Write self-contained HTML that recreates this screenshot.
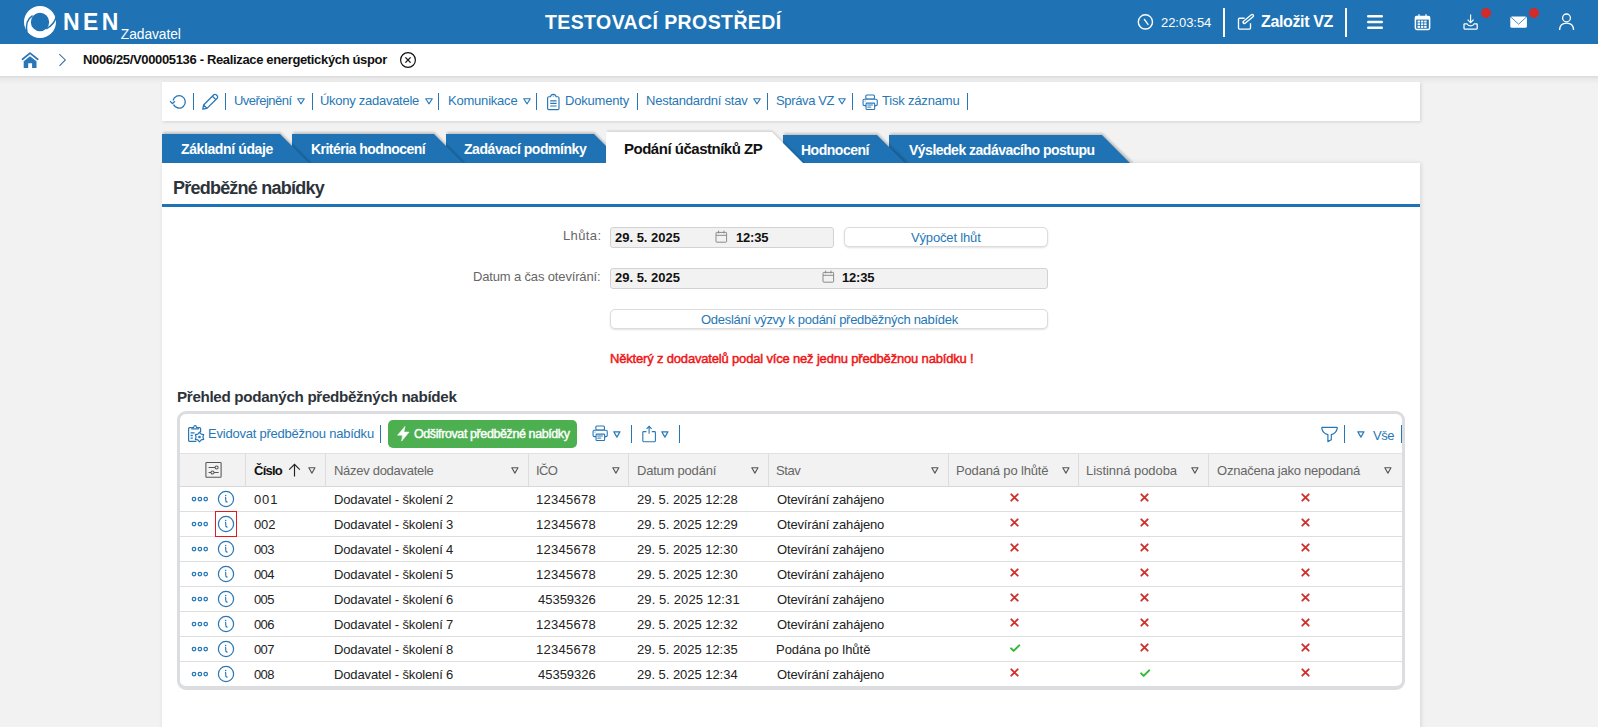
<!DOCTYPE html><html><head><meta charset="utf-8"><style>
html,body{margin:0;padding:0;}body{width:1598px;height:727px;overflow:hidden;position:relative;background:#f2f2f2;font-family:"Liberation Sans",sans-serif;}
.t{position:absolute;white-space:nowrap;font-family:"Liberation Sans",sans-serif;}
svg{overflow:visible}
</style></head><body>
<div style="position:absolute;left:0px;top:0px;width:1598px;height:44px;background:#1f73b4;"></div>
<div style="position:absolute;left:0px;top:44px;width:1598px;height:32px;background:#fff;"></div>
<div style="position:absolute;left:0px;top:76px;width:1598px;height:8px;background:linear-gradient(#dadada,#e9e9e9 35%,#f2f2f2);"></div>
<div style="position:absolute;left:162px;top:82px;width:1258px;height:39px;background:#fff;box-shadow:1px 1px 3px #d2d2d2;"></div>
<div style="position:absolute;left:162px;top:163px;width:1258px;height:600px;background:#fff;box-shadow:1px 0 4px #d4d4d4;"></div>
<svg style="position:absolute;left:24px;top:6px;" width="32" height="32" viewBox="0 0 32 32">
<circle cx="16" cy="16" r="12.6" fill="none" stroke="#fff" stroke-width="6.8"/>
<path d="M8.6 9.6 C4.5 12.2 1.3 17.5 2.9 26.4" fill="none" stroke="#1f73b4" stroke-width="1.5"/>
<path d="M22.2 22.8 C26.5 20.6 30.6 17 32.2 11" fill="none" stroke="#1f73b4" stroke-width="1.5"/>
</svg>
<svg style="position:absolute;left:1136px;top:12px;" width="20" height="20" viewBox="0 0 20 20"><circle cx="9.4" cy="9.9" r="7.1" fill="none" stroke="#fff" stroke-width="1.4"/><path d="M8.4 7.4 L12 12.4" stroke="#fff" stroke-width="1.4" fill="none" stroke-linecap="round"/></svg>
<div style="position:absolute;left:1223px;top:8px;width:2px;height:29px;background:#fff;"></div>
<svg style="position:absolute;left:1236px;top:13px;" width="20" height="20" viewBox="0 0 20 20"><path d="M8.6 5.2 H3.5 Q2.5 5.2 2.5 6.2 V15.1 Q2.5 16.1 3.5 16.1 H13.5 Q14.5 16.1 14.5 15.1 V10.3" fill="none" stroke="#fff" stroke-width="1.35"/><path d="M8.3 9.3 L16.2 2.8" stroke="#fff" stroke-width="3.9" stroke-linecap="round"/><path d="M8.6 9.1 L16.2 2.8" stroke="#1f73b4" stroke-width="1.3" stroke-linecap="round"/></svg>
<div style="position:absolute;left:1345px;top:8px;width:2px;height:29px;background:#fff;"></div>
<svg style="position:absolute;left:1366px;top:14.3px;" width="18" height="16" viewBox="0 0 18 16"><rect x="1" y="1" width="16" height="2.4" rx="1.2" fill="#fff"/><rect x="1" y="6.8" width="16" height="2.4" rx="1.2" fill="#fff"/><rect x="1" y="12.6" width="16" height="2.4" rx="1.2" fill="#fff"/></svg>
<svg style="position:absolute;left:1413px;top:13px;" width="19" height="18" viewBox="0 0 19 18"><rect x="2.4" y="3.4" width="14.2" height="13" rx="1.4" fill="none" stroke="#fff" stroke-width="1.5"/><rect x="2.4" y="3.4" width="14.2" height="3.2" fill="#fff"/><path d="M6 1.3 V4.5 M13 1.3 V4.5" stroke="#fff" stroke-width="1.3"/><g fill="#fff"><rect x="4.6" y="7.6" width="2.4" height="1.9"/><rect x="7.9" y="7.6" width="2.4" height="1.9"/><rect x="11.2" y="7.6" width="2.4" height="1.9"/><rect x="4.6" y="10.3" width="2.4" height="1.9"/><rect x="7.9" y="10.3" width="2.4" height="1.9"/><rect x="11.2" y="10.3" width="2.4" height="1.9"/><rect x="4.6" y="13.0" width="2.4" height="1.9"/><rect x="7.9" y="13.0" width="2.4" height="1.9"/><rect x="11.2" y="13.0" width="2.4" height="1.9"/></g></svg>
<svg style="position:absolute;left:1462px;top:13px;" width="19" height="18" viewBox="0 0 19 18"><path d="M8.6 1.4 V9.6 M5.6 6.6 L8.6 9.7 L11.6 6.6" fill="none" stroke="#fff" stroke-width="1.15"/><path d="M2 11.4 Q2 10.9 2.5 10.9 H5.2 Q5.9 12.9 8.6 12.9 Q11.3 12.9 12 10.9 H14.7 Q15.2 10.9 15.2 11.4 V15.3 Q15.2 16 14.5 16 H2.7 Q2 16 2 15.3 Z" fill="none" stroke="#fff" stroke-width="1.25" stroke-linejoin="round"/></svg>
<svg style="position:absolute;left:1481px;top:8px;" width="10" height="10" viewBox="0 0 10 10"><circle cx="5" cy="5" r="5" fill="#d32a2a"/></svg>
<svg style="position:absolute;left:1509px;top:15px;" width="20" height="14" viewBox="0 0 20 14"><rect x="1.3" y="1.4" width="16.6" height="11.4" rx="1.6" fill="#fff"/><path d="M1.8 2 L9.6 9.2 L17.4 2" fill="none" stroke="#1f73b4" stroke-width="0.8"/></svg>
<svg style="position:absolute;left:1529px;top:8px;" width="10" height="10" viewBox="0 0 10 10"><circle cx="5" cy="5" r="5" fill="#d32a2a"/></svg>
<svg style="position:absolute;left:1557px;top:13px;" width="19" height="18" viewBox="0 0 19 18"><circle cx="9.5" cy="4.9" r="3.9" fill="none" stroke="#fff" stroke-width="1.3"/><path d="M2.6 17 Q2.9 10.2 9.6 10.2 Q16.3 10.2 16.6 17" fill="none" stroke="#fff" stroke-width="1.3"/></svg>
<svg style="position:absolute;left:21px;top:51px;" width="18" height="18" viewBox="0 0 18 18"><path d="M1.5 8.2 L9 2.1 L16.7 8.2" fill="none" stroke="#2a77b8" stroke-width="1.8" stroke-linecap="round" stroke-linejoin="round"/><path d="M2.7 10.2 L9 5.2 L15.5 10.2 V17 H11.1 V12.3 H7.2 V17 H2.7 Z" fill="#2a77b8"/></svg>
<svg style="position:absolute;left:57px;top:53px;" width="10" height="14" viewBox="0 0 10 14"><path d="M2.3 1.2 L8.3 6.9 L2.5 12.9" fill="none" stroke="#3a6fa0" stroke-width="1.05"/></svg>
<svg style="position:absolute;left:398px;top:50px;" width="20" height="20" viewBox="0 0 20 20"><circle cx="10" cy="10" r="7.4" fill="none" stroke="#111" stroke-width="1.2"/><path d="M7.4 7.4 L12.6 12.6 M12.6 7.4 L7.4 12.6" stroke="#111" stroke-width="1.3"/></svg>
<svg style="position:absolute;left:168px;top:93px;" width="20" height="18" viewBox="0 0 20 18"><path d="M5.53 11.62 A6.2 6.2 0 1 0 5.06 7.51" fill="none" stroke="#2777b6" stroke-width="1.3"/><path d="M2.1 8.2 L4.5 10.6 L6.9 8.2" fill="none" stroke="#2777b6" stroke-width="1.3"/></svg>
<div style="position:absolute;left:192.85px;top:93px;width:1.3px;height:17px;background:#2777b6;"></div>
<svg style="position:absolute;left:201px;top:93px;" width="18" height="18" viewBox="0 0 18 18"><path d="M1.8 16.2 L2.6 12 L12.8 1.8 Q14 0.8 15.2 1.8 L16.2 2.8 Q17.2 4 16.2 5.2 L6 15.4 Z M11.4 3.2 L14.8 6.6 M2.6 12 L6 15.4" fill="none" stroke="#2777b6" stroke-width="1.3" stroke-linejoin="round"/></svg>
<div style="position:absolute;left:225.15px;top:93px;width:1.3px;height:17px;background:#2777b6;"></div>
<svg style="position:absolute;left:297px;top:98px;" width="8" height="7" viewBox="0 0 8 7"><path d="M0.7 0.7 H7.3 L4 5.9 Z" fill="none" stroke="#2777b6" stroke-width="1.05" stroke-linejoin="round"/></svg>
<div style="position:absolute;left:311.75px;top:93px;width:1.3px;height:17px;background:#2777b6;"></div>
<svg style="position:absolute;left:424.5px;top:98px;" width="8" height="7" viewBox="0 0 8 7"><path d="M0.7 0.7 H7.3 L4 5.9 Z" fill="none" stroke="#2777b6" stroke-width="1.05" stroke-linejoin="round"/></svg>
<div style="position:absolute;left:437.95000000000005px;top:93px;width:1.3px;height:17px;background:#2777b6;"></div>
<svg style="position:absolute;left:522.7px;top:98px;" width="8" height="7" viewBox="0 0 8 7"><path d="M0.7 0.7 H7.3 L4 5.9 Z" fill="none" stroke="#2777b6" stroke-width="1.05" stroke-linejoin="round"/></svg>
<div style="position:absolute;left:535.95px;top:93px;width:1.3px;height:17px;background:#2777b6;"></div>
<svg style="position:absolute;left:545px;top:93px;" width="16" height="18" viewBox="0 0 16 18"><path d="M2.6 5 Q2.6 3.7 3.9 3.7 H5.5 Q5.8 1.3 8.3 1.3 Q10.8 1.3 11.1 3.7 H12.7 Q14 3.7 14 5 V15.4 Q14 16.6 12.8 16.6 H3.8 Q2.6 16.6 2.6 15.4 Z" fill="none" stroke="#2777b6" stroke-width="1.15"/><circle cx="8.3" cy="3" r="0.6" fill="#2777b6"/><path d="M5.2 7.9 H11.6 M5.2 10.4 H11.6 M5.2 13 H11.6" stroke="#2777b6" stroke-width="1.1"/></svg>
<div style="position:absolute;left:636.95px;top:93px;width:1.3px;height:17px;background:#2777b6;"></div>
<svg style="position:absolute;left:753.2px;top:98px;" width="8" height="7" viewBox="0 0 8 7"><path d="M0.7 0.7 H7.3 L4 5.9 Z" fill="none" stroke="#2777b6" stroke-width="1.05" stroke-linejoin="round"/></svg>
<div style="position:absolute;left:766.95px;top:93px;width:1.3px;height:17px;background:#2777b6;"></div>
<svg style="position:absolute;left:838.2px;top:98px;" width="8" height="7" viewBox="0 0 8 7"><path d="M0.7 0.7 H7.3 L4 5.9 Z" fill="none" stroke="#2777b6" stroke-width="1.05" stroke-linejoin="round"/></svg>
<div style="position:absolute;left:851.95px;top:93px;width:1.3px;height:17px;background:#2777b6;"></div>
<svg style="position:absolute;left:860.5px;top:93.5px;" width="18" height="17" viewBox="0 0 18 17"><rect x="4.85" y="0.95" width="8.6" height="4" rx="1" fill="none" stroke="#2777b6" stroke-width="1.1"/><rect x="2.05" y="5.25" width="14.2" height="6.4" rx="1.3" fill="#fff" stroke="#2777b6" stroke-width="1.1"/><rect x="5.05" y="9.15" width="8.6" height="6.4" rx="0.8" fill="#fff" stroke="#2777b6" stroke-width="1.1"/><path d="M6.3 11 H11.8 M6.3 13.1 H10.2" stroke="#2777b6" stroke-width="1"/><circle cx="4.1" cy="7" r="0.55" fill="#2777b6"/></svg>
<div style="position:absolute;left:967.15px;top:93px;width:1.3px;height:17px;background:#2777b6;"></div>
<svg style="position:absolute;left:0;top:0;z-index:2" width="1598" height="727"><defs><filter id="sh" x="-5%" y="-30%" width="110%" height="160%"><feGaussianBlur stdDeviation="0.9"/></filter></defs><polygon points="890,133.2 1102.5,133.2 1133.5,163 890,163" fill="#000" opacity="0.2" filter="url(#sh)"/><polygon points="889,135 1102,135 1130,163 889,163" fill="#1f73b4"/><polygon points="784,133.2 877.5,133.2 908.5,163 784,163" fill="#000" opacity="0.2" filter="url(#sh)"/><polygon points="783,135 877,135 905,163 783,163" fill="#1f73b4"/><polygon points="447,132.2 594.5,132.2 625.5,163 447,163" fill="#000" opacity="0.2" filter="url(#sh)"/><polygon points="446,134 594,134 623,163 446,163" fill="#1f73b4"/><polygon points="293,132.2 434.5,132.2 465.5,163 293,163" fill="#000" opacity="0.2" filter="url(#sh)"/><polygon points="292,134 434,134 463,163 292,163" fill="#1f73b4"/><polygon points="163,132.2 280.5,132.2 311.5,163 163,163" fill="#000" opacity="0.2" filter="url(#sh)"/><polygon points="162,134 280,134 309,163 162,163" fill="#1f73b4"/><polygon points="607,130.8 772.5,130.8 805,163 607,163" fill="#000" opacity="0.14" filter="url(#sh)"/><polygon points="606,132 772,132 803,163 606,163" fill="#fff"/></svg>
<div style="position:absolute;left:162px;top:163px;width:1258px;height:2px;background:#fff;z-index:3;"></div>
<div style="position:absolute;left:162px;top:204px;width:1258px;height:3px;background:#1f73b4;"></div>
<div style="position:absolute;left:610px;top:227px;width:222px;height:19px;background:#f2f2f2;border:1px solid #d2d2d2;border-radius:3px;"></div>
<svg style="position:absolute;left:715.4px;top:229.8px;" width="13" height="14" viewBox="0 0 13 14"><rect x="1" y="2.4" width="10.6" height="9.8" rx="0.7" fill="none" stroke="#8a8a8a" stroke-width="1"/><path d="M1 5.3 H11.6 M3.6 0.6 V3.4 M9 0.6 V3.4" stroke="#8a8a8a" stroke-width="1" fill="none"/></svg>
<div style="position:absolute;left:610px;top:268px;width:436px;height:19px;background:#f2f2f2;border:1px solid #d2d2d2;border-radius:3px;"></div>
<svg style="position:absolute;left:822.4px;top:270.4px;" width="13" height="14" viewBox="0 0 13 14"><rect x="1" y="2.4" width="10.6" height="9.8" rx="0.7" fill="none" stroke="#8a8a8a" stroke-width="1"/><path d="M1 5.3 H11.6 M3.6 0.6 V3.4 M9 0.6 V3.4" stroke="#8a8a8a" stroke-width="1" fill="none"/></svg>
<div style="position:absolute;left:844px;top:227px;width:202px;height:18px;background:#fff;border:1px solid #dcdcdc;border-radius:5px;box-shadow:0 1px 2px rgba(0,0,0,0.12);"></div>
<div style="position:absolute;left:610px;top:309px;width:436px;height:18px;background:#fff;border:1px solid #dcdcdc;border-radius:5px;box-shadow:0 1px 2px rgba(0,0,0,0.12);"></div>
<div style="position:absolute;left:177px;top:411px;width:1222px;height:272px;border:3px solid #dcdde0;border-bottom-width:4px;border-radius:9px;background:#fff;"></div>
<svg style="position:absolute;left:187px;top:425px;" width="19" height="19" viewBox="0 0 19 19"><path d="M9.4 16.3 H2.6 Q1.6 16.3 1.6 15.3 V3.6 Q1.6 2.6 2.6 2.6 H4.8 M11.4 2.6 H12.6 Q13.6 2.6 13.6 3.6 V7.2" fill="none" stroke="#2777b6" stroke-width="1.2"/><path d="M4.9 3.9 V2.5 H6.6 Q6.9 0.6 8.1 0.6 Q9.3 0.6 9.6 2.5 H11.3 V3.9 Z" fill="none" stroke="#2777b6" stroke-width="1.1"/><path d="M3.6 7.8 H7.6 M3.6 10.5 H5.8 M3.6 13.1 H5.8" stroke="#2777b6" stroke-width="1.3"/><polygon points="12.50,7.20 14.20,9.06 16.66,9.60 15.90,12.00 16.66,14.40 14.20,14.94 12.50,16.80 10.80,14.94 8.34,14.40 9.10,12.00 8.34,9.60 10.80,9.06" fill="#fff" stroke="#2777b6" stroke-width="1.2" stroke-linejoin="round"/><circle cx="12.5" cy="12" r="1.3" fill="#2777b6"/></svg>
<div style="position:absolute;left:380.2px;top:425px;width:1.3px;height:18px;background:#2777b6;"></div>
<div style="position:absolute;left:388px;top:420px;width:189px;height:28px;background:#4caf50;border-radius:5px;"></div>
<svg style="position:absolute;left:396px;top:424px;" width="15" height="20" viewBox="0 0 15 20"><path d="M9 2.4 L1.6 11.2 H6.6 L5.6 17.1 L13.1 8.1 H7.9 Z" fill="#fff" stroke="#fff" stroke-width="0.6" stroke-linejoin="round"/></svg>
<svg style="position:absolute;left:590.6px;top:425.2px;" width="18" height="17" viewBox="0 0 18 17"><rect x="4.85" y="0.95" width="8.6" height="4" rx="1" fill="none" stroke="#2777b6" stroke-width="1.1"/><rect x="2.05" y="5.25" width="14.2" height="6.4" rx="1.3" fill="#fff" stroke="#2777b6" stroke-width="1.1"/><rect x="5.05" y="9.15" width="8.6" height="6.4" rx="0.8" fill="#fff" stroke="#2777b6" stroke-width="1.1"/><path d="M6.3 11 H11.8 M6.3 13.1 H10.2" stroke="#2777b6" stroke-width="1"/><circle cx="4.1" cy="7" r="0.55" fill="#2777b6"/></svg>
<svg style="position:absolute;left:613px;top:430.5px;" width="8" height="7" viewBox="0 0 8 7"><path d="M0.8 0.8 H7 L3.9 6.1 Z" fill="none" stroke="#2777b6" stroke-width="1.2" stroke-linejoin="round"/></svg>
<div style="position:absolute;left:630.7px;top:425px;width:1.3px;height:18px;background:#2777b6;"></div>
<svg style="position:absolute;left:640.5px;top:424px;" width="17" height="19" viewBox="0 0 17 19"><path d="M5.4 7.6 H2.7 Q1.8 7.6 1.8 8.5 V16.8 Q1.8 17.7 2.7 17.7 H13.5 Q14.4 17.7 14.4 16.8 V8.5 Q14.4 7.6 13.5 7.6 H10.8" fill="none" stroke="#2777b6" stroke-width="1.1"/><path d="M8.1 9.8 V2.4 M5.6 4.9 L8.1 2.3 L10.6 4.9" fill="none" stroke="#2777b6" stroke-width="1.1"/></svg>
<svg style="position:absolute;left:660.5px;top:430.5px;" width="8" height="7" viewBox="0 0 8 7"><path d="M0.8 0.8 H7 L3.9 6.1 Z" fill="none" stroke="#2777b6" stroke-width="1.2" stroke-linejoin="round"/></svg>
<div style="position:absolute;left:678.9px;top:425px;width:1.3px;height:18px;background:#2777b6;"></div>
<svg style="position:absolute;left:1319.5px;top:424.5px;" width="19" height="19" viewBox="0 0 19 19"><path d="M2.2 2.3 H16.8 Q17.4 2.3 17.2 3.3 Q16.4 8.2 11.3 9.6 V14.8 L7.9 16.6 V9.6 Q2.6 8.2 1.8 3.3 Q1.6 2.3 2.2 2.3 Z" fill="none" stroke="#2777b6" stroke-width="1.2" stroke-linejoin="round"/></svg>
<div style="position:absolute;left:1343.8px;top:425px;width:1.3px;height:18px;background:#2777b6;"></div>
<svg style="position:absolute;left:1356.5px;top:430.5px;" width="8" height="7" viewBox="0 0 8 7"><path d="M0.8 0.8 H7 L3.9 6.1 Z" fill="none" stroke="#2777b6" stroke-width="1.2" stroke-linejoin="round"/></svg>
<div style="position:absolute;left:1401px;top:425px;width:1.3px;height:18px;background:#2777b6;z-index:4;"></div>
<div style="position:absolute;left:180px;top:453px;width:1222px;height:33px;background:#f2f2f2;border-top:1px solid #e2e2e2;"></div>
<div style="position:absolute;left:180px;top:486px;width:1222px;height:1px;background:#d8d8d8;"></div>
<div style="position:absolute;left:245px;top:454px;width:1px;height:32px;background:#dcdcdc;"></div>
<div style="position:absolute;left:325px;top:454px;width:1px;height:32px;background:#dcdcdc;"></div>
<div style="position:absolute;left:528px;top:454px;width:1px;height:32px;background:#dcdcdc;"></div>
<div style="position:absolute;left:628px;top:454px;width:1px;height:32px;background:#dcdcdc;"></div>
<div style="position:absolute;left:768px;top:454px;width:1px;height:32px;background:#dcdcdc;"></div>
<div style="position:absolute;left:948px;top:454px;width:1px;height:32px;background:#dcdcdc;"></div>
<div style="position:absolute;left:1078px;top:454px;width:1px;height:32px;background:#dcdcdc;"></div>
<div style="position:absolute;left:1208px;top:454px;width:1px;height:32px;background:#dcdcdc;"></div>
<svg style="position:absolute;left:203.5px;top:461px;" width="19" height="18" viewBox="0 0 19 18"><rect x="1.9" y="1.5" width="15.2" height="14.8" rx="0.8" fill="none" stroke="#555" stroke-width="1.05"/><path d="M4.6 6.5 H11 M4.6 11.5 H7 M10.1 11.5 H14.6" stroke="#555" stroke-width="1.05"/><circle cx="12.6" cy="6.5" r="1.55" fill="none" stroke="#555" stroke-width="1.05"/><circle cx="8.5" cy="11.5" r="1.55" fill="none" stroke="#555" stroke-width="1.05"/></svg>
<svg style="position:absolute;left:288px;top:463px;" width="13" height="15" viewBox="0 0 13 15"><path d="M6.5 13.4 V1.6 M1.2 6.6 L6.5 1.3 L11.8 6.6" fill="none" stroke="#222" stroke-width="1.15"/></svg>
<svg style="position:absolute;left:308.2px;top:466.6px;" width="8" height="7" viewBox="0 0 8 7"><path d="M0.8 0.8 H7 L3.9 6.1 Z" fill="none" stroke="#555" stroke-width="1.1" stroke-linejoin="round"/></svg>
<svg style="position:absolute;left:511px;top:466.6px;" width="8" height="7" viewBox="0 0 8 7"><path d="M0.8 0.8 H7 L3.9 6.1 Z" fill="none" stroke="#555" stroke-width="1.1" stroke-linejoin="round"/></svg>
<svg style="position:absolute;left:611.5px;top:466.6px;" width="8" height="7" viewBox="0 0 8 7"><path d="M0.8 0.8 H7 L3.9 6.1 Z" fill="none" stroke="#555" stroke-width="1.1" stroke-linejoin="round"/></svg>
<svg style="position:absolute;left:751px;top:466.6px;" width="8" height="7" viewBox="0 0 8 7"><path d="M0.8 0.8 H7 L3.9 6.1 Z" fill="none" stroke="#555" stroke-width="1.1" stroke-linejoin="round"/></svg>
<svg style="position:absolute;left:931.2px;top:466.6px;" width="8" height="7" viewBox="0 0 8 7"><path d="M0.8 0.8 H7 L3.9 6.1 Z" fill="none" stroke="#555" stroke-width="1.1" stroke-linejoin="round"/></svg>
<svg style="position:absolute;left:1061.6px;top:466.6px;" width="8" height="7" viewBox="0 0 8 7"><path d="M0.8 0.8 H7 L3.9 6.1 Z" fill="none" stroke="#555" stroke-width="1.1" stroke-linejoin="round"/></svg>
<svg style="position:absolute;left:1191.2px;top:466.6px;" width="8" height="7" viewBox="0 0 8 7"><path d="M0.8 0.8 H7 L3.9 6.1 Z" fill="none" stroke="#555" stroke-width="1.1" stroke-linejoin="round"/></svg>
<svg style="position:absolute;left:1384.4px;top:466.6px;" width="8" height="7" viewBox="0 0 8 7"><path d="M0.8 0.8 H7 L3.9 6.1 Z" fill="none" stroke="#555" stroke-width="1.1" stroke-linejoin="round"/></svg>
<div style="position:absolute;left:180px;top:511px;width:1222px;height:1px;background:#dedede;"></div>
<svg style="position:absolute;left:191px;top:496px;" width="18" height="6" viewBox="0 0 18 6"><circle cx="3" cy="3" r="1.75" fill="none" stroke="#2777b6" stroke-width="1.25"/><circle cx="8.9" cy="3" r="1.75" fill="none" stroke="#2777b6" stroke-width="1.25"/><circle cx="14.7" cy="3" r="1.75" fill="none" stroke="#2777b6" stroke-width="1.25"/></svg>
<svg style="position:absolute;left:217px;top:490px;" width="18" height="18" viewBox="0 0 18 18"><circle cx="9" cy="9" r="7.6" fill="none" stroke="#2777b6" stroke-width="1.2"/><circle cx="8.7" cy="5.4" r="0.75" fill="#2777b6"/><path d="M8.6 7.4 Q8.9 8.4 8.7 9.6 Q8.5 11.6 10.1 12.1" fill="none" stroke="#2777b6" stroke-width="1.15" stroke-linecap="round"/></svg>
<svg style="position:absolute;left:1010.0px;top:493.4px;" width="9" height="9" viewBox="0 0 9 9"><path d="M1.3 1.3 L7.7 7.7 M7.7 1.3 L1.3 7.7" stroke="#d0302c" stroke-width="1.9" stroke-linecap="round"/></svg>
<svg style="position:absolute;left:1140.0px;top:493.4px;" width="9" height="9" viewBox="0 0 9 9"><path d="M1.3 1.3 L7.7 7.7 M7.7 1.3 L1.3 7.7" stroke="#d0302c" stroke-width="1.9" stroke-linecap="round"/></svg>
<svg style="position:absolute;left:1300.5px;top:493.4px;" width="9" height="9" viewBox="0 0 9 9"><path d="M1.3 1.3 L7.7 7.7 M7.7 1.3 L1.3 7.7" stroke="#d0302c" stroke-width="1.9" stroke-linecap="round"/></svg>
<div style="position:absolute;left:180px;top:536px;width:1222px;height:1px;background:#dedede;"></div>
<svg style="position:absolute;left:191px;top:521px;" width="18" height="6" viewBox="0 0 18 6"><circle cx="3" cy="3" r="1.75" fill="none" stroke="#2777b6" stroke-width="1.25"/><circle cx="8.9" cy="3" r="1.75" fill="none" stroke="#2777b6" stroke-width="1.25"/><circle cx="14.7" cy="3" r="1.75" fill="none" stroke="#2777b6" stroke-width="1.25"/></svg>
<svg style="position:absolute;left:217px;top:515px;" width="18" height="18" viewBox="0 0 18 18"><circle cx="9" cy="9" r="7.6" fill="none" stroke="#2777b6" stroke-width="1.2"/><circle cx="8.7" cy="5.4" r="0.75" fill="#2777b6"/><path d="M8.6 7.4 Q8.9 8.4 8.7 9.6 Q8.5 11.6 10.1 12.1" fill="none" stroke="#2777b6" stroke-width="1.15" stroke-linecap="round"/></svg>
<svg style="position:absolute;left:1010.0px;top:518.4px;" width="9" height="9" viewBox="0 0 9 9"><path d="M1.3 1.3 L7.7 7.7 M7.7 1.3 L1.3 7.7" stroke="#d0302c" stroke-width="1.9" stroke-linecap="round"/></svg>
<svg style="position:absolute;left:1140.0px;top:518.4px;" width="9" height="9" viewBox="0 0 9 9"><path d="M1.3 1.3 L7.7 7.7 M7.7 1.3 L1.3 7.7" stroke="#d0302c" stroke-width="1.9" stroke-linecap="round"/></svg>
<svg style="position:absolute;left:1300.5px;top:518.4px;" width="9" height="9" viewBox="0 0 9 9"><path d="M1.3 1.3 L7.7 7.7 M7.7 1.3 L1.3 7.7" stroke="#d0302c" stroke-width="1.9" stroke-linecap="round"/></svg>
<div style="position:absolute;left:180px;top:561px;width:1222px;height:1px;background:#dedede;"></div>
<svg style="position:absolute;left:191px;top:546px;" width="18" height="6" viewBox="0 0 18 6"><circle cx="3" cy="3" r="1.75" fill="none" stroke="#2777b6" stroke-width="1.25"/><circle cx="8.9" cy="3" r="1.75" fill="none" stroke="#2777b6" stroke-width="1.25"/><circle cx="14.7" cy="3" r="1.75" fill="none" stroke="#2777b6" stroke-width="1.25"/></svg>
<svg style="position:absolute;left:217px;top:540px;" width="18" height="18" viewBox="0 0 18 18"><circle cx="9" cy="9" r="7.6" fill="none" stroke="#2777b6" stroke-width="1.2"/><circle cx="8.7" cy="5.4" r="0.75" fill="#2777b6"/><path d="M8.6 7.4 Q8.9 8.4 8.7 9.6 Q8.5 11.6 10.1 12.1" fill="none" stroke="#2777b6" stroke-width="1.15" stroke-linecap="round"/></svg>
<svg style="position:absolute;left:1010.0px;top:543.4px;" width="9" height="9" viewBox="0 0 9 9"><path d="M1.3 1.3 L7.7 7.7 M7.7 1.3 L1.3 7.7" stroke="#d0302c" stroke-width="1.9" stroke-linecap="round"/></svg>
<svg style="position:absolute;left:1140.0px;top:543.4px;" width="9" height="9" viewBox="0 0 9 9"><path d="M1.3 1.3 L7.7 7.7 M7.7 1.3 L1.3 7.7" stroke="#d0302c" stroke-width="1.9" stroke-linecap="round"/></svg>
<svg style="position:absolute;left:1300.5px;top:543.4px;" width="9" height="9" viewBox="0 0 9 9"><path d="M1.3 1.3 L7.7 7.7 M7.7 1.3 L1.3 7.7" stroke="#d0302c" stroke-width="1.9" stroke-linecap="round"/></svg>
<div style="position:absolute;left:180px;top:586px;width:1222px;height:1px;background:#dedede;"></div>
<svg style="position:absolute;left:191px;top:571px;" width="18" height="6" viewBox="0 0 18 6"><circle cx="3" cy="3" r="1.75" fill="none" stroke="#2777b6" stroke-width="1.25"/><circle cx="8.9" cy="3" r="1.75" fill="none" stroke="#2777b6" stroke-width="1.25"/><circle cx="14.7" cy="3" r="1.75" fill="none" stroke="#2777b6" stroke-width="1.25"/></svg>
<svg style="position:absolute;left:217px;top:565px;" width="18" height="18" viewBox="0 0 18 18"><circle cx="9" cy="9" r="7.6" fill="none" stroke="#2777b6" stroke-width="1.2"/><circle cx="8.7" cy="5.4" r="0.75" fill="#2777b6"/><path d="M8.6 7.4 Q8.9 8.4 8.7 9.6 Q8.5 11.6 10.1 12.1" fill="none" stroke="#2777b6" stroke-width="1.15" stroke-linecap="round"/></svg>
<svg style="position:absolute;left:1010.0px;top:568.4px;" width="9" height="9" viewBox="0 0 9 9"><path d="M1.3 1.3 L7.7 7.7 M7.7 1.3 L1.3 7.7" stroke="#d0302c" stroke-width="1.9" stroke-linecap="round"/></svg>
<svg style="position:absolute;left:1140.0px;top:568.4px;" width="9" height="9" viewBox="0 0 9 9"><path d="M1.3 1.3 L7.7 7.7 M7.7 1.3 L1.3 7.7" stroke="#d0302c" stroke-width="1.9" stroke-linecap="round"/></svg>
<svg style="position:absolute;left:1300.5px;top:568.4px;" width="9" height="9" viewBox="0 0 9 9"><path d="M1.3 1.3 L7.7 7.7 M7.7 1.3 L1.3 7.7" stroke="#d0302c" stroke-width="1.9" stroke-linecap="round"/></svg>
<div style="position:absolute;left:180px;top:611px;width:1222px;height:1px;background:#dedede;"></div>
<svg style="position:absolute;left:191px;top:596px;" width="18" height="6" viewBox="0 0 18 6"><circle cx="3" cy="3" r="1.75" fill="none" stroke="#2777b6" stroke-width="1.25"/><circle cx="8.9" cy="3" r="1.75" fill="none" stroke="#2777b6" stroke-width="1.25"/><circle cx="14.7" cy="3" r="1.75" fill="none" stroke="#2777b6" stroke-width="1.25"/></svg>
<svg style="position:absolute;left:217px;top:590px;" width="18" height="18" viewBox="0 0 18 18"><circle cx="9" cy="9" r="7.6" fill="none" stroke="#2777b6" stroke-width="1.2"/><circle cx="8.7" cy="5.4" r="0.75" fill="#2777b6"/><path d="M8.6 7.4 Q8.9 8.4 8.7 9.6 Q8.5 11.6 10.1 12.1" fill="none" stroke="#2777b6" stroke-width="1.15" stroke-linecap="round"/></svg>
<svg style="position:absolute;left:1010.0px;top:593.4px;" width="9" height="9" viewBox="0 0 9 9"><path d="M1.3 1.3 L7.7 7.7 M7.7 1.3 L1.3 7.7" stroke="#d0302c" stroke-width="1.9" stroke-linecap="round"/></svg>
<svg style="position:absolute;left:1140.0px;top:593.4px;" width="9" height="9" viewBox="0 0 9 9"><path d="M1.3 1.3 L7.7 7.7 M7.7 1.3 L1.3 7.7" stroke="#d0302c" stroke-width="1.9" stroke-linecap="round"/></svg>
<svg style="position:absolute;left:1300.5px;top:593.4px;" width="9" height="9" viewBox="0 0 9 9"><path d="M1.3 1.3 L7.7 7.7 M7.7 1.3 L1.3 7.7" stroke="#d0302c" stroke-width="1.9" stroke-linecap="round"/></svg>
<div style="position:absolute;left:180px;top:636px;width:1222px;height:1px;background:#dedede;"></div>
<svg style="position:absolute;left:191px;top:621px;" width="18" height="6" viewBox="0 0 18 6"><circle cx="3" cy="3" r="1.75" fill="none" stroke="#2777b6" stroke-width="1.25"/><circle cx="8.9" cy="3" r="1.75" fill="none" stroke="#2777b6" stroke-width="1.25"/><circle cx="14.7" cy="3" r="1.75" fill="none" stroke="#2777b6" stroke-width="1.25"/></svg>
<svg style="position:absolute;left:217px;top:615px;" width="18" height="18" viewBox="0 0 18 18"><circle cx="9" cy="9" r="7.6" fill="none" stroke="#2777b6" stroke-width="1.2"/><circle cx="8.7" cy="5.4" r="0.75" fill="#2777b6"/><path d="M8.6 7.4 Q8.9 8.4 8.7 9.6 Q8.5 11.6 10.1 12.1" fill="none" stroke="#2777b6" stroke-width="1.15" stroke-linecap="round"/></svg>
<svg style="position:absolute;left:1010.0px;top:618.4px;" width="9" height="9" viewBox="0 0 9 9"><path d="M1.3 1.3 L7.7 7.7 M7.7 1.3 L1.3 7.7" stroke="#d0302c" stroke-width="1.9" stroke-linecap="round"/></svg>
<svg style="position:absolute;left:1140.0px;top:618.4px;" width="9" height="9" viewBox="0 0 9 9"><path d="M1.3 1.3 L7.7 7.7 M7.7 1.3 L1.3 7.7" stroke="#d0302c" stroke-width="1.9" stroke-linecap="round"/></svg>
<svg style="position:absolute;left:1300.5px;top:618.4px;" width="9" height="9" viewBox="0 0 9 9"><path d="M1.3 1.3 L7.7 7.7 M7.7 1.3 L1.3 7.7" stroke="#d0302c" stroke-width="1.9" stroke-linecap="round"/></svg>
<div style="position:absolute;left:180px;top:661px;width:1222px;height:1px;background:#dedede;"></div>
<svg style="position:absolute;left:191px;top:646px;" width="18" height="6" viewBox="0 0 18 6"><circle cx="3" cy="3" r="1.75" fill="none" stroke="#2777b6" stroke-width="1.25"/><circle cx="8.9" cy="3" r="1.75" fill="none" stroke="#2777b6" stroke-width="1.25"/><circle cx="14.7" cy="3" r="1.75" fill="none" stroke="#2777b6" stroke-width="1.25"/></svg>
<svg style="position:absolute;left:217px;top:640px;" width="18" height="18" viewBox="0 0 18 18"><circle cx="9" cy="9" r="7.6" fill="none" stroke="#2777b6" stroke-width="1.2"/><circle cx="8.7" cy="5.4" r="0.75" fill="#2777b6"/><path d="M8.6 7.4 Q8.9 8.4 8.7 9.6 Q8.5 11.6 10.1 12.1" fill="none" stroke="#2777b6" stroke-width="1.15" stroke-linecap="round"/></svg>
<svg style="position:absolute;left:1009.5px;top:643.7px;" width="10" height="9" viewBox="0 0 10 9"><path d="M1.1 4.4 L3.6 6.9 L9.2 1.4" fill="none" stroke="#30bb36" stroke-width="2" stroke-linecap="round" stroke-linejoin="round"/></svg>
<svg style="position:absolute;left:1140.0px;top:643.4px;" width="9" height="9" viewBox="0 0 9 9"><path d="M1.3 1.3 L7.7 7.7 M7.7 1.3 L1.3 7.7" stroke="#d0302c" stroke-width="1.9" stroke-linecap="round"/></svg>
<svg style="position:absolute;left:1300.5px;top:643.4px;" width="9" height="9" viewBox="0 0 9 9"><path d="M1.3 1.3 L7.7 7.7 M7.7 1.3 L1.3 7.7" stroke="#d0302c" stroke-width="1.9" stroke-linecap="round"/></svg>
<svg style="position:absolute;left:191px;top:671px;" width="18" height="6" viewBox="0 0 18 6"><circle cx="3" cy="3" r="1.75" fill="none" stroke="#2777b6" stroke-width="1.25"/><circle cx="8.9" cy="3" r="1.75" fill="none" stroke="#2777b6" stroke-width="1.25"/><circle cx="14.7" cy="3" r="1.75" fill="none" stroke="#2777b6" stroke-width="1.25"/></svg>
<svg style="position:absolute;left:217px;top:665px;" width="18" height="18" viewBox="0 0 18 18"><circle cx="9" cy="9" r="7.6" fill="none" stroke="#2777b6" stroke-width="1.2"/><circle cx="8.7" cy="5.4" r="0.75" fill="#2777b6"/><path d="M8.6 7.4 Q8.9 8.4 8.7 9.6 Q8.5 11.6 10.1 12.1" fill="none" stroke="#2777b6" stroke-width="1.15" stroke-linecap="round"/></svg>
<svg style="position:absolute;left:1010.0px;top:668.4px;" width="9" height="9" viewBox="0 0 9 9"><path d="M1.3 1.3 L7.7 7.7 M7.7 1.3 L1.3 7.7" stroke="#d0302c" stroke-width="1.9" stroke-linecap="round"/></svg>
<svg style="position:absolute;left:1139.5px;top:668.7px;" width="10" height="9" viewBox="0 0 10 9"><path d="M1.1 4.4 L3.6 6.9 L9.2 1.4" fill="none" stroke="#30bb36" stroke-width="2" stroke-linecap="round" stroke-linejoin="round"/></svg>
<svg style="position:absolute;left:1300.5px;top:668.4px;" width="9" height="9" viewBox="0 0 9 9"><path d="M1.3 1.3 L7.7 7.7 M7.7 1.3 L1.3 7.7" stroke="#d0302c" stroke-width="1.9" stroke-linecap="round"/></svg>
<div style="position:absolute;left:215px;top:511px;width:22px;height:26px;border:1.5px solid #e01b22;box-sizing:border-box;z-index:4;"></div>
<span class="t" id="t0" style="left:63.00px;top:11.33px;font-size:23px;line-height:23px;font-weight:700;color:#fff;letter-spacing:3.450px;z-index:5;">NEN</span>
<span class="t" id="t1" style="left:120.80px;top:28.32px;font-size:13.8px;line-height:13.8px;font-weight:400;color:#fff;letter-spacing:-0.063px;z-index:5;">Zadavatel</span>
<span class="t" id="t2" style="left:545.00px;top:13.49px;font-size:19.5px;line-height:19.5px;font-weight:700;color:#fff;letter-spacing:0.400px;z-index:5;">TESTOVACÍ PROSTŘEDÍ</span>
<span class="t" id="t3" style="left:1161.00px;top:15.90px;font-size:13px;line-height:13px;font-weight:400;color:#fff;letter-spacing:-0.043px;z-index:5;">22:03:54</span>
<span class="t" id="t4" style="left:1261.00px;top:13.66px;font-size:16px;line-height:16px;font-weight:700;color:#fff;letter-spacing:-0.367px;z-index:5;">Založit VZ</span>
<span class="t" id="t5" style="left:83.00px;top:52.80px;font-size:13px;line-height:13px;font-weight:700;color:#111;letter-spacing:-0.346px;z-index:5;">N006/25/V00005136 - Realizace energetických úspor</span>
<span class="t" id="t6" style="left:234.00px;top:94.10px;font-size:13px;line-height:13px;font-weight:400;color:#2777b6;letter-spacing:-0.533px;z-index:5;">Uveřejnění</span>
<span class="t" id="t7" style="left:320.00px;top:94.10px;font-size:13px;line-height:13px;font-weight:400;color:#2777b6;letter-spacing:-0.273px;z-index:5;">Úkony zadavatele</span>
<span class="t" id="t8" style="left:448.00px;top:94.10px;font-size:13px;line-height:13px;font-weight:400;color:#2777b6;letter-spacing:-0.211px;z-index:5;">Komunikace</span>
<span class="t" id="t9" style="left:565.00px;top:94.10px;font-size:13px;line-height:13px;font-weight:400;color:#2777b6;letter-spacing:-0.200px;z-index:5;">Dokumenty</span>
<span class="t" id="t10" style="left:646.00px;top:94.10px;font-size:13px;line-height:13px;font-weight:400;color:#2777b6;letter-spacing:-0.237px;z-index:5;">Nestandardní stav</span>
<span class="t" id="t11" style="left:776.00px;top:94.10px;font-size:13px;line-height:13px;font-weight:400;color:#2777b6;letter-spacing:-0.363px;z-index:5;">Správa VZ</span>
<span class="t" id="t12" style="left:882.00px;top:94.10px;font-size:13px;line-height:13px;font-weight:400;color:#2777b6;letter-spacing:-0.191px;z-index:5;">Tisk záznamu</span>
<span class="t" id="t13" style="left:181.00px;top:141.95px;font-size:14px;line-height:14px;font-weight:700;color:#fff;letter-spacing:-0.385px;z-index:6;">Základní údaje</span>
<span class="t" id="t14" style="left:311.00px;top:141.95px;font-size:14px;line-height:14px;font-weight:700;color:#fff;letter-spacing:-0.529px;z-index:6;">Kritéria hodnocení</span>
<span class="t" id="t15" style="left:464.00px;top:141.95px;font-size:14px;line-height:14px;font-weight:700;color:#fff;letter-spacing:-0.450px;z-index:6;">Zadávací podmínky</span>
<span class="t" id="t16" style="left:624.00px;top:141.30px;font-size:15px;line-height:15px;font-weight:700;color:#111;letter-spacing:-0.489px;z-index:6;">Podání účastníků ZP</span>
<span class="t" id="t17" style="left:801.00px;top:142.75px;font-size:14px;line-height:14px;font-weight:700;color:#fff;letter-spacing:-0.488px;z-index:6;">Hodnocení</span>
<span class="t" id="t18" style="left:909.00px;top:142.75px;font-size:14px;line-height:14px;font-weight:700;color:#fff;letter-spacing:-0.504px;z-index:6;">Výsledek zadávacího postupu</span>
<span class="t" id="t19" style="left:173.00px;top:178.66px;font-size:18px;line-height:18px;font-weight:700;color:#2d333a;letter-spacing:-0.775px;z-index:5;">Předběžné nabídky</span>
<span class="t" id="t20" style="left:563.00px;top:229.30px;font-size:13px;line-height:13px;font-weight:400;color:#666;letter-spacing:0.380px;z-index:5;">Lhůta:</span>
<span class="t" id="t21" style="left:473.00px;top:270.30px;font-size:13px;line-height:13px;font-weight:400;color:#666;letter-spacing:-0.152px;z-index:5;">Datum a čas otevírání:</span>
<span class="t" id="t22" style="left:615.00px;top:230.90px;font-size:13px;line-height:13px;font-weight:700;color:#111;letter-spacing:-0.010px;z-index:5;">29. 5. 2025</span>
<span class="t" id="t23" style="left:736.00px;top:230.90px;font-size:13px;line-height:13px;font-weight:700;color:#111;letter-spacing:-0.200px;z-index:5;">12:35</span>
<span class="t" id="t24" style="left:615.00px;top:271.00px;font-size:13px;line-height:13px;font-weight:700;color:#111;letter-spacing:-0.010px;z-index:5;">29. 5. 2025</span>
<span class="t" id="t25" style="left:842.00px;top:271.00px;font-size:13px;line-height:13px;font-weight:700;color:#111;letter-spacing:-0.200px;z-index:5;">12:35</span>
<span class="t" id="t26" style="left:911.00px;top:230.50px;font-size:13px;line-height:13px;font-weight:400;color:#2777b6;letter-spacing:-0.164px;z-index:5;">Výpočet lhůt</span>
<span class="t" id="t27" style="left:701.00px;top:313.00px;font-size:13px;line-height:13px;font-weight:400;color:#2777b6;letter-spacing:-0.295px;z-index:5;">Odeslání výzvy k podání předběžných nabídek</span>
<span class="t" id="t28" style="left:610.00px;top:352.20px;font-size:13px;line-height:13px;font-weight:400;color:#f01414;letter-spacing:-0.175px;z-index:5;-webkit-text-stroke:0.45px #f01414;">Některý z dodavatelů podal více než jednu předběžnou nabídku !</span>
<span class="t" id="t29" style="left:177.00px;top:389.33px;font-size:15.2px;line-height:15.2px;font-weight:700;color:#2d333a;letter-spacing:-0.323px;z-index:5;">Přehled podaných předběžných nabídek</span>
<span class="t" id="t30" style="left:208.00px;top:427.20px;font-size:13px;line-height:13px;font-weight:400;color:#2777b6;letter-spacing:-0.227px;z-index:5;">Evidovat předběžnou nabídku</span>
<span class="t" id="t31" style="left:414.00px;top:428.42px;font-size:12.5px;line-height:12.5px;font-weight:400;color:#fff;letter-spacing:-0.400px;z-index:5;-webkit-text-stroke:0.4px #fff;">Odšifrovat předběžné nabídky</span>
<span class="t" id="t32" style="left:1373.00px;top:428.60px;font-size:13px;line-height:13px;font-weight:400;color:#2777b6;letter-spacing:-0.450px;z-index:5;">Vše</span>
<span class="t" id="t33" style="left:254.00px;top:464.20px;font-size:13px;line-height:13px;font-weight:700;color:#111;letter-spacing:-0.750px;z-index:5;">Číslo</span>
<span class="t" id="t34" style="left:334.00px;top:464.20px;font-size:13px;line-height:13px;font-weight:400;color:#666;letter-spacing:-0.287px;z-index:5;">Název dodavatele</span>
<span class="t" id="t35" style="left:536.00px;top:464.20px;font-size:13px;line-height:13px;font-weight:400;color:#666;letter-spacing:-0.600px;z-index:5;">IČO</span>
<span class="t" id="t36" style="left:637.00px;top:464.20px;font-size:13px;line-height:13px;font-weight:400;color:#666;letter-spacing:-0.218px;z-index:5;">Datum podání</span>
<span class="t" id="t37" style="left:776.00px;top:464.20px;font-size:13px;line-height:13px;font-weight:400;color:#666;letter-spacing:-0.400px;z-index:5;">Stav</span>
<span class="t" id="t38" style="left:956.00px;top:464.20px;font-size:13px;line-height:13px;font-weight:400;color:#666;letter-spacing:-0.157px;z-index:5;">Podaná po lhůtě</span>
<span class="t" id="t39" style="left:1086.00px;top:464.20px;font-size:13px;line-height:13px;font-weight:400;color:#666;letter-spacing:-0.050px;z-index:5;">Listinná podoba</span>
<span class="t" id="t40" style="left:1217.00px;top:464.20px;font-size:13px;line-height:13px;font-weight:400;color:#666;letter-spacing:-0.233px;z-index:5;">Označena jako nepodaná</span>
<span class="t" id="t41" style="left:254.00px;top:492.90px;font-size:13px;line-height:13px;font-weight:400;color:#222;letter-spacing:0.850px;z-index:5;">001</span>
<span class="t" id="t42" style="left:334.00px;top:492.90px;font-size:13px;line-height:13px;font-weight:400;color:#222;letter-spacing:-0.140px;z-index:5;">Dodavatel - školení 2</span>
<span class="t" id="t43" style="left:536.00px;top:492.90px;font-size:13px;line-height:13px;font-weight:400;color:#222;letter-spacing:0.271px;z-index:5;">12345678</span>
<span class="t" id="t44" style="left:637.00px;top:492.90px;font-size:13px;line-height:13px;font-weight:400;color:#222;letter-spacing:-0.037px;z-index:5;">29. 5. 2025 12:28</span>
<span class="t" id="t45" style="left:777.00px;top:492.90px;font-size:13px;line-height:13px;font-weight:400;color:#222;letter-spacing:-0.147px;z-index:5;">Otevírání zahájeno</span>
<span class="t" id="t46" style="left:254.00px;top:517.90px;font-size:13px;line-height:13px;font-weight:400;color:#222;letter-spacing:-0.150px;z-index:5;">002</span>
<span class="t" id="t47" style="left:334.00px;top:517.90px;font-size:13px;line-height:13px;font-weight:400;color:#222;letter-spacing:-0.140px;z-index:5;">Dodavatel - školení 3</span>
<span class="t" id="t48" style="left:536.00px;top:517.90px;font-size:13px;line-height:13px;font-weight:400;color:#222;letter-spacing:0.271px;z-index:5;">12345678</span>
<span class="t" id="t49" style="left:637.00px;top:517.90px;font-size:13px;line-height:13px;font-weight:400;color:#222;letter-spacing:-0.037px;z-index:5;">29. 5. 2025 12:29</span>
<span class="t" id="t50" style="left:777.00px;top:517.90px;font-size:13px;line-height:13px;font-weight:400;color:#222;letter-spacing:-0.147px;z-index:5;">Otevírání zahájeno</span>
<span class="t" id="t51" style="left:254.00px;top:542.90px;font-size:13px;line-height:13px;font-weight:400;color:#222;letter-spacing:-0.650px;z-index:5;">003</span>
<span class="t" id="t52" style="left:334.00px;top:542.90px;font-size:13px;line-height:13px;font-weight:400;color:#222;letter-spacing:-0.140px;z-index:5;">Dodavatel - školení 4</span>
<span class="t" id="t53" style="left:536.00px;top:542.90px;font-size:13px;line-height:13px;font-weight:400;color:#222;letter-spacing:0.271px;z-index:5;">12345678</span>
<span class="t" id="t54" style="left:637.00px;top:542.90px;font-size:13px;line-height:13px;font-weight:400;color:#222;letter-spacing:-0.037px;z-index:5;">29. 5. 2025 12:30</span>
<span class="t" id="t55" style="left:777.00px;top:542.90px;font-size:13px;line-height:13px;font-weight:400;color:#222;letter-spacing:-0.147px;z-index:5;">Otevírání zahájeno</span>
<span class="t" id="t56" style="left:254.00px;top:567.90px;font-size:13px;line-height:13px;font-weight:400;color:#222;letter-spacing:-0.650px;z-index:5;">004</span>
<span class="t" id="t57" style="left:334.00px;top:567.90px;font-size:13px;line-height:13px;font-weight:400;color:#222;letter-spacing:-0.140px;z-index:5;">Dodavatel - školení 5</span>
<span class="t" id="t58" style="left:536.00px;top:567.90px;font-size:13px;line-height:13px;font-weight:400;color:#222;letter-spacing:0.271px;z-index:5;">12345678</span>
<span class="t" id="t59" style="left:637.00px;top:567.90px;font-size:13px;line-height:13px;font-weight:400;color:#222;letter-spacing:-0.037px;z-index:5;">29. 5. 2025 12:30</span>
<span class="t" id="t60" style="left:777.00px;top:567.90px;font-size:13px;line-height:13px;font-weight:400;color:#222;letter-spacing:-0.147px;z-index:5;">Otevírání zahájeno</span>
<span class="t" id="t61" style="left:254.00px;top:592.90px;font-size:13px;line-height:13px;font-weight:400;color:#222;letter-spacing:-0.650px;z-index:5;">005</span>
<span class="t" id="t62" style="left:334.00px;top:592.90px;font-size:13px;line-height:13px;font-weight:400;color:#222;letter-spacing:-0.140px;z-index:5;">Dodavatel - školení 6</span>
<span class="t" id="t63" style="left:538.00px;top:592.90px;font-size:13px;line-height:13px;font-weight:400;color:#222;letter-spacing:-0.014px;z-index:5;">45359326</span>
<span class="t" id="t64" style="left:637.00px;top:592.90px;font-size:13px;line-height:13px;font-weight:400;color:#222;letter-spacing:0.088px;z-index:5;">29. 5. 2025 12:31</span>
<span class="t" id="t65" style="left:777.00px;top:592.90px;font-size:13px;line-height:13px;font-weight:400;color:#222;letter-spacing:-0.147px;z-index:5;">Otevírání zahájeno</span>
<span class="t" id="t66" style="left:254.00px;top:617.90px;font-size:13px;line-height:13px;font-weight:400;color:#222;letter-spacing:-0.650px;z-index:5;">006</span>
<span class="t" id="t67" style="left:334.00px;top:617.90px;font-size:13px;line-height:13px;font-weight:400;color:#222;letter-spacing:-0.140px;z-index:5;">Dodavatel - školení 7</span>
<span class="t" id="t68" style="left:536.00px;top:617.90px;font-size:13px;line-height:13px;font-weight:400;color:#222;letter-spacing:0.271px;z-index:5;">12345678</span>
<span class="t" id="t69" style="left:637.00px;top:617.90px;font-size:13px;line-height:13px;font-weight:400;color:#222;letter-spacing:-0.037px;z-index:5;">29. 5. 2025 12:32</span>
<span class="t" id="t70" style="left:777.00px;top:617.90px;font-size:13px;line-height:13px;font-weight:400;color:#222;letter-spacing:-0.147px;z-index:5;">Otevírání zahájeno</span>
<span class="t" id="t71" style="left:254.00px;top:642.90px;font-size:13px;line-height:13px;font-weight:400;color:#222;letter-spacing:-0.650px;z-index:5;">007</span>
<span class="t" id="t72" style="left:334.00px;top:642.90px;font-size:13px;line-height:13px;font-weight:400;color:#222;letter-spacing:-0.140px;z-index:5;">Dodavatel - školení 8</span>
<span class="t" id="t73" style="left:536.00px;top:642.90px;font-size:13px;line-height:13px;font-weight:400;color:#222;letter-spacing:0.271px;z-index:5;">12345678</span>
<span class="t" id="t74" style="left:637.00px;top:642.90px;font-size:13px;line-height:13px;font-weight:400;color:#222;letter-spacing:-0.037px;z-index:5;">29. 5. 2025 12:35</span>
<span class="t" id="t75" style="left:776.00px;top:642.90px;font-size:13px;line-height:13px;font-weight:400;color:#222;letter-spacing:-0.021px;z-index:5;">Podána po lhůtě</span>
<span class="t" id="t76" style="left:254.00px;top:667.90px;font-size:13px;line-height:13px;font-weight:400;color:#222;letter-spacing:-0.650px;z-index:5;">008</span>
<span class="t" id="t77" style="left:334.00px;top:667.90px;font-size:13px;line-height:13px;font-weight:400;color:#222;letter-spacing:-0.140px;z-index:5;">Dodavatel - školení 6</span>
<span class="t" id="t78" style="left:538.00px;top:667.90px;font-size:13px;line-height:13px;font-weight:400;color:#222;letter-spacing:-0.014px;z-index:5;">45359326</span>
<span class="t" id="t79" style="left:637.00px;top:667.90px;font-size:13px;line-height:13px;font-weight:400;color:#222;letter-spacing:-0.037px;z-index:5;">29. 5. 2025 12:34</span>
<span class="t" id="t80" style="left:777.00px;top:667.90px;font-size:13px;line-height:13px;font-weight:400;color:#222;letter-spacing:-0.147px;z-index:5;">Otevírání zahájeno</span>
</body></html>
